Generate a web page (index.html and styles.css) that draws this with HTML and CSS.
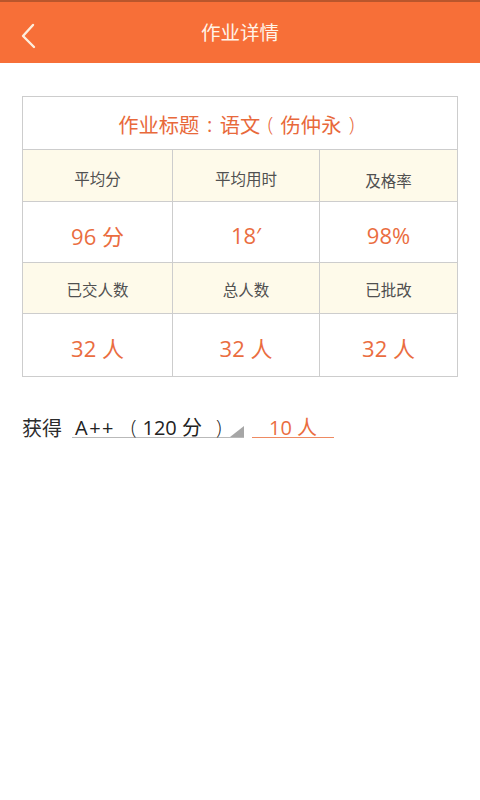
FILE: index.html
```html
<!DOCTYPE html>
<html lang="zh-CN">
<head>
<meta charset="utf-8">
<title>作业详情</title>
<link rel="stylesheet" href="styles.css">
</head>
<body>
<header class="topbar">
  <span class="back">
    <svg width="16" height="26" viewBox="0 0 16 26"><polyline points="12,2 2,13 13,24" fill="none" stroke="#fdeedd" stroke-width="2.4" stroke-linecap="round" stroke-linejoin="round"/></svg>
  </span>
  <h1 class="title">作业详情</h1>
</header>
<main class="content">
  <div class="grid">
    <div class="cell caption">作业标题<span class="p colon">:</span>语文<span class="p">(</span>伤仲永<span class="p">)</span></div>
    <div class="cell label">平均分</div>
    <div class="cell label">平均用时</div>
    <div class="cell label low">及格率</div>
    <div class="cell value">96 分</div>
    <div class="cell value">18′</div>
    <div class="cell value">98%</div>
    <div class="cell label label2">已交人数</div>
    <div class="cell label label2">总人数</div>
    <div class="cell label label2">已批改</div>
    <div class="cell value value2">32 人</div>
    <div class="cell value value2">32 人</div>
    <div class="cell value value2">32 人</div>
  </div>
  <div class="grade-row">
    <span class="grade-label">获得</span>
    <span class="select"><span class="grade">A++</span><span class="lp">(</span>120 分<span class="rp">)</span><i class="corner"></i></span>
    <span class="count">10 人</span>
  </div>
</main>
</body>
</html>
```
FILE: styles.css
```css
html, body {
  margin: 0;
  padding: 0;
  background: #ffffff;
}
body {
  font-family: "Open Sans", "Noto Sans CJK SC", sans-serif;
  color: #333;
}
.topbar {
  position: relative;
  height: 61px;
  border-top: 2px solid #b9562c;
  background: #f76f38;
  display: flex;
  align-items: center;
  justify-content: center;
}
.back {
  position: absolute;
  left: 21px;
  top: 21px;
  width: 16px;
  height: 26px;
}
.back svg { display: block; }
.title {
  margin: 0;
  font-family: "Noto Sans CJK SC", sans-serif;
  font-weight: normal;
  font-size: 19.5px;
  color: #fff4e8;
  line-height: 1;
  padding-bottom: 2px;
}
.content {
  padding: 33px 0 0 22px;
}
.grid {
  width: 434px;
  padding: 1px;
  background: #cdcdcd;
  display: grid;
  grid-template-columns: 149px 146px 1fr;
  grid-template-rows: 52px 51px 60px 50px 62px;
  gap: 1px;
}
.cell {
  background: #fff;
  display: flex;
  align-items: center;
  justify-content: center;
  font-family: "Open Sans", "Noto Sans CJK SC", sans-serif;
}
.p {
  display: inline-block;
  width: 1em;
  text-align: center;
  font-family: "Open Sans", sans-serif;
  font-weight: 300;
}
.p.colon {
  font-weight: 400;
}
.caption {
  grid-column: 1 / 4;
  font-family: "Noto Sans CJK SC", sans-serif;
  font-size: 20.3px;
  color: #e8693b;
  padding-top: 1px;
}
.label {
  background: #fefaea;
  font-family: "Noto Sans CJK SC", sans-serif;
  font-size: 15.5px;
  color: #505050;
  padding-top: 4px;
}
.label.low { padding-top: 8px; }
.label.label2 { padding-top: 2px; }
.value {
  font-size: 22px;
  color: #ea6d3f;
  padding-top: 5px;
}
.value.value2 { padding-top: 4px; }
.grade-row {
  display: flex;
  align-items: flex-end;
  margin-top: 38px;
  font-family: "Open Sans", "Noto Sans CJK SC", sans-serif;
  font-size: 20px;
  line-height: 18px;
}
.grade-label,
.select,
.count {
  padding-top: 4px;
}
.grade-label {
  font-family: "Noto Sans CJK SC", sans-serif;
  color: #2b2b2b;
  padding-bottom: 1px;
  margin-right: 10px;
}
.select {
  position: relative;
  width: 169px;
  padding-left: 3px;
  border-bottom: 1px solid #b9b9b9;
  color: #222;
  white-space: nowrap;
}
.grade {
  letter-spacing: 1.5px;
}
.lp,
.rp {
  font-weight: 300;
}
.lp {
  margin: 0 6px 0 16px;
}
.rp {
  margin-left: 14px;
}
.corner {
  position: absolute;
  right: 0;
  bottom: 0;
  width: 0;
  height: 0;
  border-left: 14px solid transparent;
  border-bottom: 11px solid #a6a6a6;
}
.count {
  width: 82px;
  margin-left: 8px;
  text-align: center;
  color: #ea6d3f;
  border-bottom: 1px solid #ee8a62;
}
```
